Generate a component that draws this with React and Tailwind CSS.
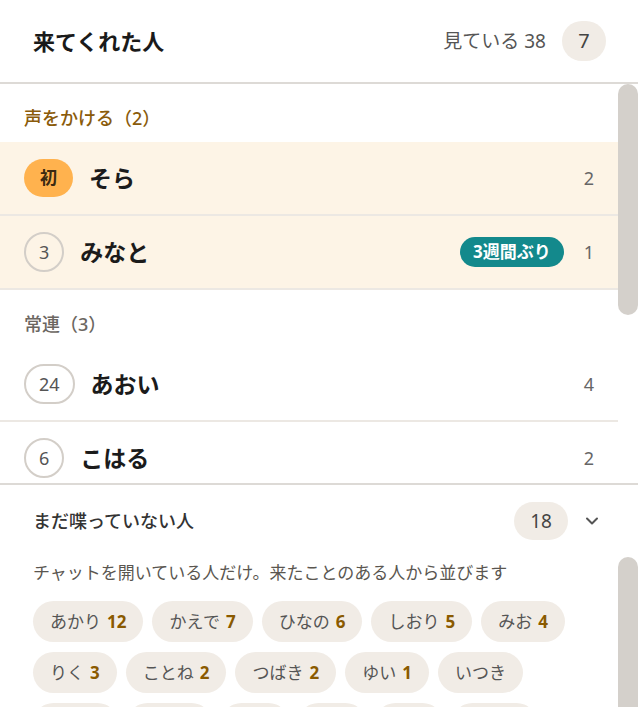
import { ChevronDown } from 'lucide-react'

const sections = [
  {
    label: '声をかける（2）',
    tone: 'text-[#8a5b0a]',
    highlight: true,
    rows: [
      { mark: '初', first: true, name: 'そら', count: 2 },
      { mark: '3', name: 'みなと', tag: '3週間ぶり', count: 1 },
    ],
  },
  {
    label: '常連（3）',
    tone: 'text-[#6b6661]',
    rows: [
      { mark: '24', name: 'あおい', count: 4 },
      { mark: '6', name: 'こはる', count: 2 },
      { mark: '11', name: 'たくみ', count: 1 },
    ],
  },
  {
    label: '久しぶり（2）',
    tone: 'text-[#6b6661]',
    rows: [
      { mark: '2', name: 'ゆうき', count: 1 },
      { mark: '5', name: 'なぎさ', count: 1 },
    ],
  },
]

const quiet = [
  ['あかり', 12], ['かえで', 7], ['ひなの', 6], ['しおり', 5], ['みお', 4],
  ['りく', 3], ['ことね', 2], ['つばき', 2], ['ゆい', 1], ['いつき'],
  ['はると'], ['そうた'], ['ゆな'], ['めい'], ['れん'], ['さくら'], ['ひかり'], ['あおと'],
]

function ScrollPanel({ height, thumb, children }) {
  return (
    <div className={`flex shrink-0 overflow-hidden ${height}`}>
      <div className="min-w-0 flex-1 overflow-hidden">{children}</div>
      <div className="w-5 shrink-0">
        <div className={`rounded-full bg-[#d4d0cb] ${thumb}`} />
      </div>
    </div>
  )
}

function Mark({ row }) {
  if (row.first) {
    return (
      <span className="flex h-[38px] w-[49px] items-center justify-center rounded-full bg-[#ffb24e] text-[17px] font-bold text-[#3b2a12]">
        {row.mark}
      </span>
    )
  }
  return (
    <span className="flex h-[40px] min-w-[40px] items-center justify-center rounded-full border-2 border-[#d3cec8] px-[13px] text-[18px] text-[#555]">
      {row.mark}
    </span>
  )
}

function Row({ row, highlight }) {
  return (
    <div className={`flex h-[74px] items-center gap-4 border-b-2 border-[#ece8e3] pl-6 pr-6 ${highlight ? 'bg-[#fdf4e6]' : ''}`}>
      <Mark row={row} />
      <span className="flex-1 text-[23px] font-bold text-[#1b1b1b]">{row.name}</span>
      {row.tag && (
        <span className="mr-1 rounded-full bg-[#13898c] px-[13px] py-[2px] text-[17px] font-bold text-white">{row.tag}</span>
      )}
      <span className="text-[18px] text-[#666]">{row.count}</span>
    </div>
  )
}

export default function App() {
  return (
    <div className="flex h-[707px] flex-col overflow-hidden bg-white font-['Noto_Sans','Noto_Sans_CJK_JP',sans-serif]">
      <header className="flex h-[84px] shrink-0 items-center border-b-2 border-[#dddad6] pl-[33px] pr-[32px]">
        <h1 className="flex-1 text-[22px] font-bold text-[#1a1a1a]">来てくれた人</h1>
        <span className="mr-4 text-[19px] text-[#555]">見ている 38</span>
        <span className="flex h-[40px] w-[44px] items-center justify-center rounded-full bg-[#f1ece6] text-[20px] text-[#444]">7</span>
      </header>

      <ScrollPanel height="h-[399px]" thumb="h-[231px]">
        {sections.map((section) => (
          <div key={section.label}>
            <div className={`pl-6 pt-[21px] pb-[11px] text-[18px] leading-[26px] font-medium ${section.tone}`}>{section.label}</div>
            {section.rows.map((row) => (
              <Row key={row.name} row={row} highlight={section.highlight} />
            ))}
          </div>
        ))}
      </ScrollPanel>

      <section className="shrink-0 border-t-2 border-[#dddad6]">
        <div className="flex h-[72px] items-center pl-[33px] pr-[36px]">
          <h2 className="flex-1 text-[18px] font-medium text-[#333]">まだ喋っていない人</h2>
          <span className="flex h-[38px] w-[54px] items-center justify-center rounded-full bg-[#f1ece6] text-[19px] text-[#444]">18</span>
          <ChevronDown className="ml-[14px] text-[#555]" size={20} strokeWidth={2.4} />
        </div>
        <ScrollPanel height="h-[240px]" thumb="h-[220px]">
          <p className="pl-[33px] pt-[5px] text-[17px] leading-[22px] text-[#5a5650]">チャットを開いている人だけ。来たことのある人から並びます</p>
          <div className="flex flex-wrap gap-x-[9px] gap-y-[10px] pt-[17px] pb-6 pl-[33px] pr-4">
            {quiet.map(([name, count]) => (
              <span key={name} className="flex h-[41px] items-center gap-[6px] rounded-full bg-[#f1ece6] px-[17px] text-[17px] text-[#555]">
                {name}
                {count && <b className="font-bold text-[#8a5a00]">{count}</b>}
              </span>
            ))}
          </div>
        </ScrollPanel>
      </section>
    </div>
  )
}
